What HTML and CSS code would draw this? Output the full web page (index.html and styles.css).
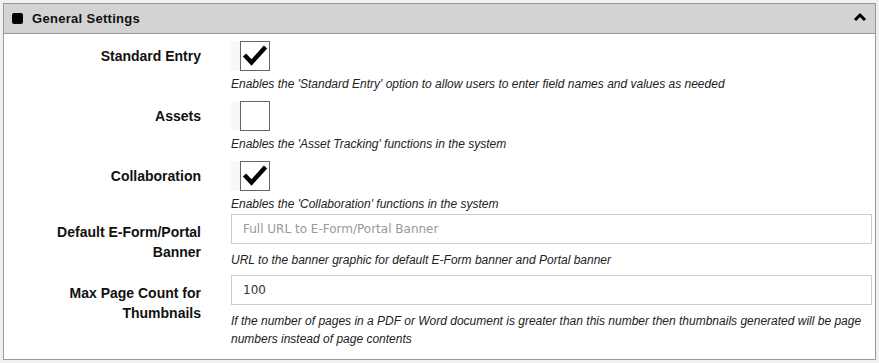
FILE: index.html
```html
<!DOCTYPE html>
<html lang="en">
<head>
    <meta charset="UTF-8">
    <meta name="viewport" content="width=device-width, initial-scale=1.0">
    <title>General Settings</title>
    <link rel="stylesheet" href="styles.css">
</head>
<body>
    <!-- General settings panel -->
    <div class="panel">
        <div class="panel-header">
            <span class="panel-icon"></span>
            <span class="panel-title">General Settings</span>
            <svg class="panel-toggle" width="14" height="10" viewBox="0 0 14 10">
                <polyline points="2,8 7,3 12,8" fill="none" stroke="#000" stroke-width="3"/>
            </svg>
        </div>

        <div class="panel-body">
            <div class="row row-check">
                <div class="row-label">Standard Entry</div>
                <div class="row-field">
                    <span class="check-wrap">
                        <span class="check-box">
                            <svg width="28" height="28" viewBox="0 0 28 28">
                                <polyline points="3.5,13 10.5,20.5 24.5,5" fill="none" stroke="#000" stroke-width="4.5"/>
                            </svg>
                        </span>
                    </span>
                    <div class="help">Enables the 'Standard Entry' option to allow users to enter field names and values as needed</div>
                </div>
            </div>

            <div class="row row-check">
                <div class="row-label">Assets</div>
                <div class="row-field">
                    <span class="check-wrap">
                        <span class="check-box"></span>
                    </span>
                    <div class="help">Enables the 'Asset Tracking' functions in the system</div>
                </div>
            </div>

            <div class="row row-check">
                <div class="row-label">Collaboration</div>
                <div class="row-field">
                    <span class="check-wrap">
                        <span class="check-box">
                            <svg width="28" height="28" viewBox="0 0 28 28">
                                <polyline points="3.5,13 10.5,20.5 24.5,5" fill="none" stroke="#000" stroke-width="4.5"/>
                            </svg>
                        </span>
                    </span>
                    <div class="help">Enables the 'Collaboration' functions in the system</div>
                </div>
            </div>

            <div class="row row-text">
                <div class="row-label">Default E-Form/Portal Banner</div>
                <div class="row-field">
                    <input type="text" class="text-input" placeholder="Full URL to E-Form/Portal Banner">
                    <div class="help">URL to the banner graphic for default E-Form banner and Portal banner</div>
                </div>
            </div>

            <div class="row row-text">
                <div class="row-label">Max Page Count for Thumbnails</div>
                <div class="row-field">
                    <input type="text" class="text-input" value="100">
                    <div class="help">If the number of pages in a PDF or Word document is greater than this number then thumbnails generated will be page numbers instead of page contents</div>
                </div>
            </div>
        </div>
    </div>
</body>
</html>
```

FILE: styles.css
```css
body {
    margin: 3px;
    background: #f0f0f0;
    font-family: 'Liberation Sans', Arial, sans-serif;
    color: #111;
}
.panel {
    background: white;
    border: 1px solid #999;
    box-shadow: 1px 1px 0 #aaa;
}
.panel-header {
    display: flex;
    align-items: center;
    height: 29px;
    padding: 0 8px 0 8px;
    background: #d3d3d3;
    border-bottom: 1px solid #999;
}
.panel-icon {
    width: 11px;
    height: 11px;
    border-radius: 2px;
    background: #000;
    margin-right: 9px;
}
.panel-title {
    font-size: 13px;
    font-weight: bold;
    letter-spacing: 0.3px;
    flex: 1;
}
.panel-toggle {
    margin-top: -4px;
}
.panel-body {
    padding: 7px 3px 11px 0;
}
.row {
    display: grid;
    grid-template-columns: 197px 1fr;
    column-gap: 30px;
}
.row-check + .row-check {
    margin-top: 8px;
}
.row-check + .row-text {
    margin-top: 1px;
}
.row-text + .row-text {
    margin-top: 6px;
}
.row-label {
    text-align: right;
    font-size: 14px;
    font-weight: bold;
    line-height: 20px;
    padding-left: 40px;
}
.row-check .row-label {
    padding-top: 5px;
}
.row-text .row-label {
    padding-top: 8px;
}
.check-wrap {
    display: flex;
    justify-content: flex-end;
    width: 39px;
    height: 30px;
    background: #f8f8f8;
}
.check-box {
    display: block;
    width: 28px;
    height: 28px;
    border: 1px solid #666;
    background: white;
}
.check-box svg {
    display: block;
}
.help {
    font-size: 12px;
    font-style: italic;
    line-height: 18px;
    color: #222;
}
.row-check .help {
    margin-top: 4px;
}
.row-text .help {
    margin-top: 7px;
}
.text-input {
    display: block;
    box-sizing: border-box;
    width: 100%;
    height: 30px;
    padding: 0 11px;
    border: 1px solid #ccc;
    font-family: 'DejaVu Sans', Verdana, sans-serif;
    font-size: 12px;
    color: #333;
    outline: none;
}
.text-input::placeholder {
    color: #999;
}
```
